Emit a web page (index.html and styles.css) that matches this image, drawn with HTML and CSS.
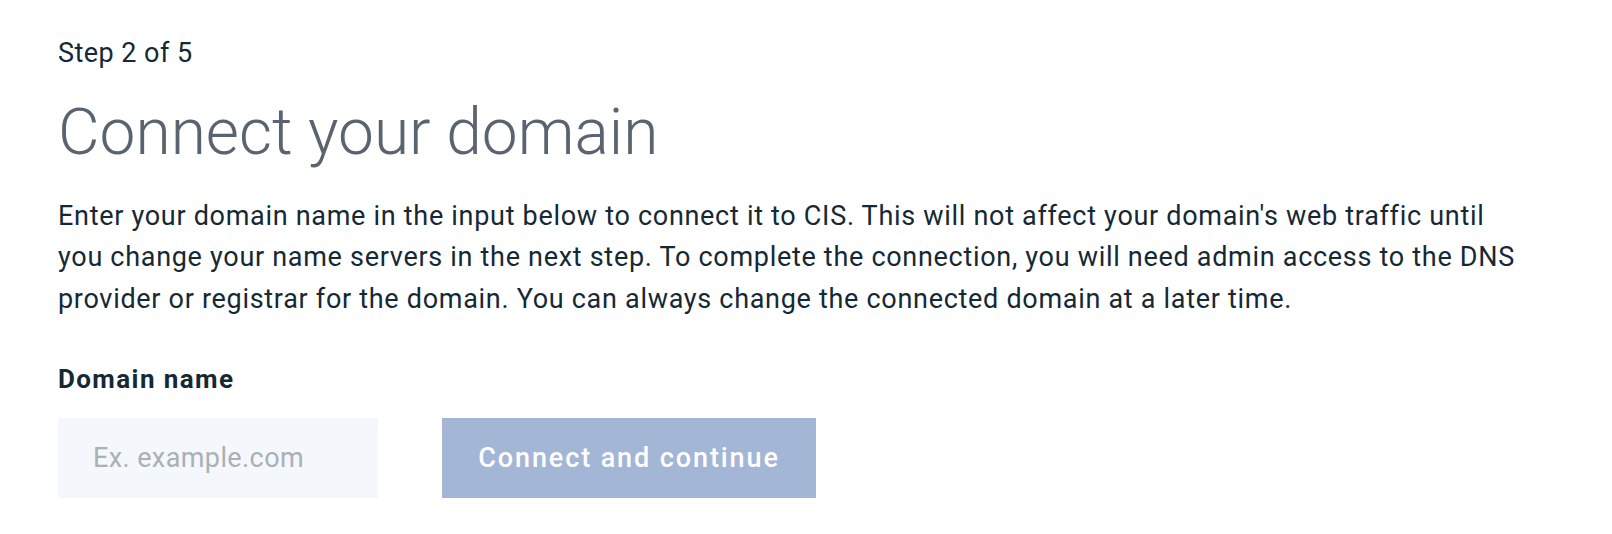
FILE: index.html
```html
<!DOCTYPE html>
<html lang="en">
<head>
<meta charset="utf-8">
<title>Connect your domain</title>
<link rel="stylesheet" href="styles.css">
</head>
<body>
<main class="page">
  <p class="step">Step 2 of 5</p>
  <h1 class="title">Connect your domain</h1>
  <p class="desc">Enter your domain name in the input below to connect it to CIS. This will not affect your domain's web traffic until<br>you change your name servers in the next step. To complete the connection, you will need admin access to the DNS<br>provider or registrar for the domain. You can always change the connected domain at a later time.</p>
  <label class="label" for="domain">Domain name</label>
  <div class="row">
    <input class="field" id="domain" type="text" placeholder="Ex. example.com">
    <button class="btn" type="button" disabled>Connect and continue</button>
  </div>
</main>
</body>
</html>
```
FILE: styles.css
```css
html, body {
  margin: 0;
  padding: 0;
  background: #ffffff;
}
body {
  font-family: Roboto, "Liberation Sans", sans-serif;
  color: #152935;
}
.page {
  padding: 34.5px 58px 0 58px;
}
.step {
  margin: 0;
  font-size: 27px;
  line-height: 36px;
  letter-spacing: 0.45px;
  color: #152935;
}
.title {
  margin: 22.5px 0 0 0;
  font-size: 64px;
  line-height: 80px;
  font-weight: 300;
  color: #5a6470;
}
.desc {
  margin: 22.7px 0 0 0;
  font-size: 27px;
  line-height: 41.5px;
  letter-spacing: 0.7px;
  white-space: nowrap;
  color: #152935;
}
.label {
  display: block;
  margin-top: 42.6px;
  font-size: 26px;
  line-height: 32px;
  font-weight: 700;
  letter-spacing: 1.4px;
  color: #152935;
}
.row {
  display: flex;
  gap: 64px;
  margin-top: 23.2px;
}
.field {
  box-sizing: border-box;
  width: 320px;
  height: 80px;
  border: 0;
  outline: none;
  margin: 0;
  padding: 0 0 0 35px;
  background: #f4f7fb;
  font-family: Roboto, "Liberation Sans", sans-serif;
  font-size: 27px;
  letter-spacing: 0.4px;
  color: #152935;
}
.field::placeholder {
  color: #aab1b6;
  opacity: 1;
}
.btn {
  box-sizing: border-box;
  width: 374px;
  height: 80px;
  border: 0;
  margin: 0;
  padding: 0;
  background: #a3b6d6;
  color: #ffffff;
  font-family: Roboto, "Liberation Sans", sans-serif;
  font-size: 27px;
  font-weight: 500;
  letter-spacing: 1.9px;
}
```
